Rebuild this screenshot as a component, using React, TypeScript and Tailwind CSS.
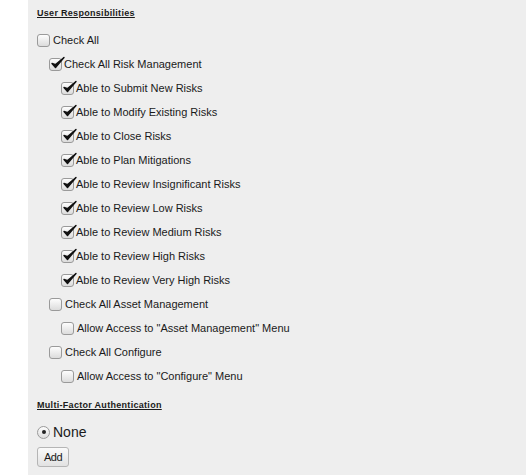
import React from "react";

type Item = { label: string; level: number; checked: boolean };

const items: Item[] = [
  { label: "Check All", level: 0, checked: false },
  { label: "Check All Risk Management", level: 1, checked: true },
  { label: "Able to Submit New Risks", level: 2, checked: true },
  { label: "Able to Modify Existing Risks", level: 2, checked: true },
  { label: "Able to Close Risks", level: 2, checked: true },
  { label: "Able to Plan Mitigations", level: 2, checked: true },
  { label: "Able to Review Insignificant Risks", level: 2, checked: true },
  { label: "Able to Review Low Risks", level: 2, checked: true },
  { label: "Able to Review Medium Risks", level: 2, checked: true },
  { label: "Able to Review High Risks", level: 2, checked: true },
  { label: "Able to Review Very High Risks", level: 2, checked: true },
  { label: "Check All Asset Management", level: 1, checked: false },
  { label: 'Allow Access to "Asset Management" Menu', level: 2, checked: false },
  { label: "Check All Configure", level: 1, checked: false },
  { label: 'Allow Access to "Configure" Menu', level: 2, checked: false },
];

// gtk-ish checkbox, check mark spills over the box
function Box({ checked }: { checked: boolean }) {
  return (
    <span className="relative inline-block h-[13px] w-[13px] shrink-0 rounded-[3px] border border-[#9a9a9a] bg-gradient-to-b from-[#fdfdfd] to-[#dcdcdc]">
      {checked && (
        <svg
          className="absolute left-[1px] top-[-3px] overflow-visible"
          width="14"
          height="14"
          viewBox="0 0 14 14"
        >
          <path d="M1 7.5 L4.5 11.5 L13 1.5 L4.6 8.6 Z" fill="#111" stroke="#111" strokeWidth="1.4" strokeLinejoin="round" />
        </svg>
      )}
    </span>
  );
}

const indent = ["pl-0", "pl-[12px]", "pl-[24px]"];

export default function App() {
  return (
    <div className="flex h-[475px] w-[526px] bg-white font-['Liberation_Sans',Arial,sans-serif] text-[#1a1a1a]">
      <div className="w-[28px] shrink-0" />
      <div className="flex-1 bg-[#eeeeee] pl-[9px] pt-[6px]">
        <div className="h-[14px] text-[9px] font-bold leading-[14px] tracking-[0.3px] underline">
          User Responsibilities
        </div>
        <div className="mt-[8px] flex flex-col">
          {items.map((it) => (
            <label
              key={it.label}
              className={`flex h-[24px] items-center text-[11px] ${indent[it.level]}`}
            >
              <Box checked={it.checked} />
              <span className={it.checked ? "ml-[2px]" : "ml-[3px]"}>{it.label}</span>
            </label>
          ))}
        </div>
        <div className="mt-[10px] h-[14px] text-[9px] font-bold leading-[14px] tracking-[0.3px] underline">
          Multi-Factor Authentication
        </div>
        <div className="mt-[8px] flex h-[24px] items-center text-[14px]">
          <span className="flex h-[13px] w-[13px] items-center justify-center rounded-full border border-[#9a9a9a] bg-gradient-to-b from-[#fdfdfd] to-[#dcdcdc]">
            <span className="h-[4px] w-[4px] rounded-full bg-[#222]" />
          </span>
          <span className="ml-[3px]">None</span>
        </div>
        <button
          type="button"
          className="mt-[2px] h-[20px] rounded-[3px] border border-[#b5b5b5] bg-gradient-to-b from-[#fafafa] to-[#e2e2e2] px-[6px] text-[11px] leading-[18px] tracking-[-0.5px]"
        >
          Add
        </button>
      </div>
    </div>
  );
}
